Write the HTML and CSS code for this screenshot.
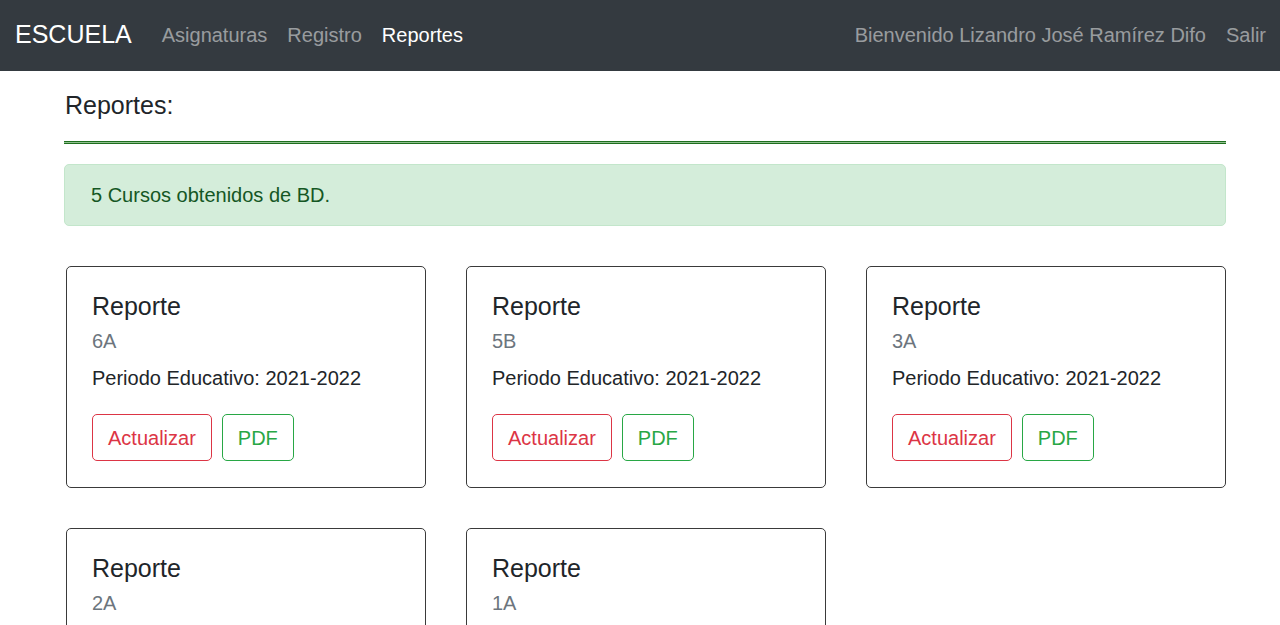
FILE: index.html
```html
<!DOCTYPE html>
<html lang="es">
<head>
<meta charset="utf-8">
<title>Escuela - Reportes</title>
<link rel="stylesheet" href="styles.css">
</head>
<body>
<nav class="navbar">
  <div class="nav-left">
    <a class="brand" href="#">ESCUELA</a>
    <a class="nav-link" href="#">Asignaturas</a>
    <a class="nav-link" href="#">Registro</a>
    <a class="nav-link active" href="#">Reportes</a>
  </div>
  <div class="nav-right">
    <span class="nav-link">Bienvenido Lizandro José Ramírez Difo</span>
    <a class="nav-link last" href="#">Salir</a>
  </div>
</nav>
<main class="container">
  <h4 class="page-title">Reportes:</h4>
  <hr class="green-rule">
  <div class="alert">5 Cursos obtenidos de BD.</div>
  <div class="cards">
    <div class="card">
      <h5 class="card-title">Reporte</h5>
      <h6 class="card-subtitle">6A</h6>
      <p class="card-text">Periodo Educativo: 2021-2022</p>
      <div class="actions"><a class="btn btn-danger" href="#">Actualizar</a><a class="btn btn-success" href="#">PDF</a></div>
    </div>
    <div class="card">
      <h5 class="card-title">Reporte</h5>
      <h6 class="card-subtitle">5B</h6>
      <p class="card-text">Periodo Educativo: 2021-2022</p>
      <div class="actions"><a class="btn btn-danger" href="#">Actualizar</a><a class="btn btn-success" href="#">PDF</a></div>
    </div>
    <div class="card">
      <h5 class="card-title">Reporte</h5>
      <h6 class="card-subtitle">3A</h6>
      <p class="card-text">Periodo Educativo: 2021-2022</p>
      <div class="actions"><a class="btn btn-danger" href="#">Actualizar</a><a class="btn btn-success" href="#">PDF</a></div>
    </div>
    <div class="card">
      <h5 class="card-title">Reporte</h5>
      <h6 class="card-subtitle">2A</h6>
      <p class="card-text">Periodo Educativo: 2021-2022</p>
      <div class="actions"><a class="btn btn-danger" href="#">Actualizar</a><a class="btn btn-success" href="#">PDF</a></div>
    </div>
    <div class="card">
      <h5 class="card-title">Reporte</h5>
      <h6 class="card-subtitle">1A</h6>
      <p class="card-text">Periodo Educativo: 2021-2022</p>
      <div class="actions"><a class="btn btn-danger" href="#">Actualizar</a><a class="btn btn-success" href="#">PDF</a></div>
    </div>
  </div>
</main>
</body>
</html>
```
FILE: styles.css
```css
* { box-sizing: border-box; }
html, body { margin: 0; padding: 0; }
body {
  font-family: "Liberation Sans", Arial, sans-serif;
  font-size: 20px;
  line-height: 1.5;
  color: #212529;
  background: #fff;
}
a { text-decoration: none; }

.navbar {
  height: 71px;
  background: #343a40;
  display: flex;
  align-items: center;
  justify-content: space-between;
  padding: 0 4px 2px 15px;
}
.nav-left, .nav-right { display: flex; align-items: center; }
.brand {
  color: #fff;
  font-size: 25px;
  line-height: 37px;
  margin-right: 20px;
}
.nav-link {
  color: rgba(255, 255, 255, 0.5);
  padding: 0 10px;
  font-size: 20px;
  line-height: 30px;
}
.nav-link.active { color: #fff; }

.container {
  width: 1162px;
  margin: 0 0 0 64px;
}
.page-title {
  font-size: 25px;
  font-weight: 400;
  line-height: 30px;
  margin: 19px 0 21px 1px;
}
.green-rule {
  height: 3px;
  margin: 0 0 20px;
  border: 0;
  border-top: 1px solid #1f6f1f;
  border-bottom: 1px solid #1f6f1f;
  background: #8fbf8f;
}
.alert {
  background: #d4edda;
  border: 1px solid #c3e6cb;
  border-radius: 5px;
  color: #155724;
  padding: 15px 26px;
  line-height: 30px;
  margin-bottom: 40px;
}

.cards {
  display: grid;
  grid-template-columns: repeat(3, 360px);
  column-gap: 40px;
  row-gap: 40px;
  margin-left: 2px;
}
.card {
  border: 1px solid #3a3a3a;
  border-radius: 5px;
  padding: 24px 25px 26px;
}
.card-title {
  font-size: 25px;
  font-weight: 400;
  line-height: 30px;
  margin: 0 0 15px;
}
.card-subtitle {
  font-size: 20px;
  font-weight: 400;
  line-height: 24px;
  color: #6c757d;
  margin: -7px 0 10px;
}
.card-text {
  margin: 0 0 21px;
  line-height: 30px;
}
.actions { display: flex; gap: 10px; }
.btn {
  display: inline-block;
  border: 1px solid;
  border-radius: 5px;
  padding: 7.5px 15px;
  line-height: 30px;
  font-size: 20px;
}
.btn-danger { color: #dc3545; border-color: #dc3545; }
.btn-success { color: #28a745; border-color: #28a745; }
```
